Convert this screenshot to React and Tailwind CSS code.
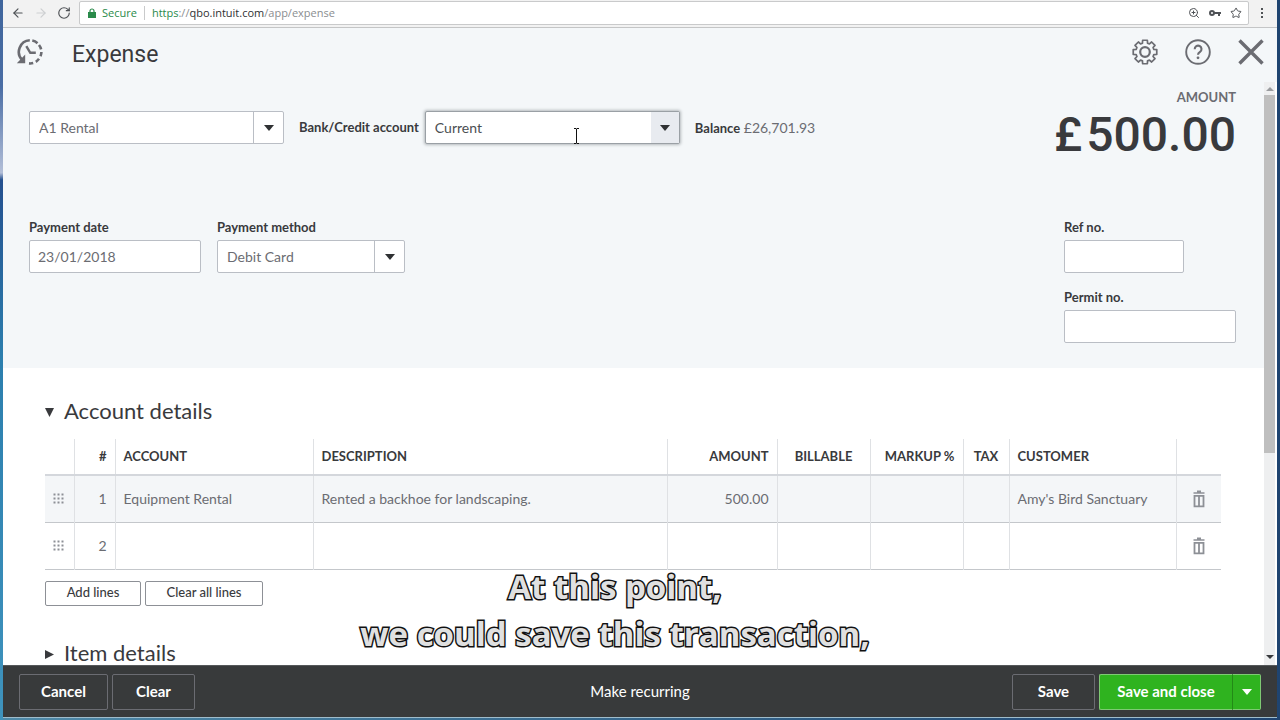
import { useState } from 'react';
import { ArrowLeft, ArrowRight, RotateCw, ZoomIn, Star } from 'lucide-react';
import clsx from 'clsx';

const initialLines = [
  { id: 1, account: 'Equipment Rental', description: 'Rented a backhoe for landscaping.', amount: '500.00', customer: "Amy's Bird Sanctuary" },
  { id: 2, account: '', description: '', amount: '', customer: '' },
];

// 8 teeth with slightly rounded joins
const gearPoints = Array.from({ length: 8 }, (_, i) => {
  const a = (i * Math.PI) / 4;
  return [[-0.28, 9.2], [-0.2, 12], [0.2, 12], [0.28, 9.2]]
    .map(([d, r]) => `${(13 + r * Math.sin(a + d)).toFixed(2)},${(13 - r * Math.cos(a + d)).toFixed(2)}`)
    .join(' ');
}).join(' ');

const GearIcon = () => (
  <svg width="26" height="26" viewBox="0 0 26 26" fill="none" stroke="currentColor" strokeLinejoin="round">
    <polygon points={gearPoints} strokeWidth="1.7" />
    <circle cx="13" cy="13" r="4.8" strokeWidth="2.2" />
  </svg>
);

const HelpIcon = () => (
  <svg width="26" height="26" viewBox="0 0 26 26" fill="none" stroke="currentColor">
    <circle cx="13" cy="13" r="11.8" strokeWidth="1.9" />
    <path d="M9.7 10.2a3.4 3.4 0 1 1 5.3 2.7c-1.3.9-2 1.4-2 2.9" strokeWidth="2.1" />
    <circle cx="13" cy="18.8" r="1.4" fill="currentColor" stroke="none" />
  </svg>
);

const CloseIcon = () => (
  <svg width="26" height="26" viewBox="0 0 26 26" fill="none" stroke="currentColor" strokeWidth="3.4">
    <path d="M1.5 1.5 24.5 24.5M24.5 1.5 1.5 24.5" />
  </svg>
);

const RecentIcon = () => (
  <svg width="28" height="28" viewBox="0 0 28 28" fill="none" stroke="currentColor" strokeWidth="2.6">
    <path d="M13.8 2.3A11.6 11.6 0 0 0 6.2 22" />
    <path d="M16.3 2.6a11.6 11.6 0 0 1 5.2 2.6M23 7a11.6 11.6 0 0 1 2.1 4.4M25.4 14a11.6 11.6 0 0 1-.9 4.2M23 20.8a11.6 11.6 0 0 1-3.2 3M17.2 25.1a11.6 11.6 0 0 1-4.2.3" />
    <path d="M10.3 8.2l4 6.6h5.5" strokeWidth="2.4" />
    <path d="M9.2 16.6v8.6H.8z" fill="currentColor" stroke="none" />
  </svg>
);

const TrashIcon = () => (
  <svg width="12" height="18" viewBox="0 0 12 18" fill="none" stroke="currentColor">
    <path d="M.5 3h11M4 1.4h4" strokeWidth="1.6" />
    <path d="M1.5 5.9h9v10.4h-9zM6 5.9v10.4" strokeWidth="1.8" />
  </svg>
);

const KeyIcon = () => (
  <svg width="12" height="8" viewBox="0 0 12 8" fill="none" stroke="currentColor">
    <circle cx="3" cy="4" r="2" strokeWidth="2" />
    <path d="M5 4h7M10 4v3" strokeWidth="2" />
  </svg>
);

const LockIcon = () => (
  <svg width="8" height="10" viewBox="0 0 8 10" fill="currentColor">
    <path d="M0 4h8v6H0z" />
    <path d="M2 4.5V3a2 2 0 0 1 4 0v1.5" fill="none" stroke="currentColor" strokeWidth="1.2" />
  </svg>
);

const GripIcon = () => (
  <svg width="11" height="11" viewBox="0 0 11 11" fill="#8d9096">
    {[1, 5, 9].map((y) => [1, 5, 9].map((x) => <rect key={`${x}-${y}`} x={x - 0.5} y={y - 0.5} width="2" height="2" />))}
  </svg>
);

const Caret = ({ className }) => (
  <svg width="10" height="6" viewBox="0 0 10 6" preserveAspectRatio="none" fill="currentColor" className={className}>
    <path d="M0 0h10L5 6z" />
  </svg>
);

const SelectBox = ({ id, label, options, focused, className }) => (
  <div className={clsx('relative h-[33px]', className)}>
    <select
      id={id}
      aria-label={label}
      className={clsx(
        'h-full w-full appearance-none rounded-xs border bg-white pr-9 pl-[9px] text-sm outline-none',
        focused ? 'border-[#9aa0a5] text-[#4b4e52] shadow-[0_0_3px_1px_#b5babd]' : 'border-[#babec5] text-[#6b6c72]'
      )}
    >
      {options.map((o) => <option key={o}>{o}</option>)}
    </select>
    <span
      className={clsx(
        'pointer-events-none absolute inset-y-px right-px flex items-center justify-center text-[#2f3133]',
        focused ? 'w-7 bg-[#e8ebf0]' : 'w-[30px] border-l border-[#babec5]'
      )}
    >
      <Caret />
    </span>
  </div>
);

const TextField = ({ id, label, defaultValue, className }) => (
  <div className="flex flex-col">
    <label htmlFor={id} className="mb-1 text-[13px] leading-[18px] font-bold">{label}</label>
    <input
      id={id}
      defaultValue={defaultValue}
      className={clsx('h-[33px] rounded-xs border border-[#babec5] bg-white px-2 text-sm text-[#6b6c72] outline-none', className)}
    />
  </div>
);

const BrowserBar = () => (
  <div className="flex h-7 shrink-0 items-center border-b border-[#c4c5c6] bg-[#f2f2f2] pr-0.5 pb-px pl-2 text-[#4f5256]">
    <button aria-label="Back"><ArrowLeft size={14} /></button>
    <button aria-label="Forward" className="ml-[9px] text-[#cdcfd1]"><ArrowRight size={14} /></button>
    <button aria-label="Reload" className="ml-[9px]"><RotateCw size={14} /></button>
    <div className="ml-2 flex h-6 flex-1 items-center rounded-xs border border-[#c9cacb] bg-white pr-1.5 pl-2 font-['Open_Sans',sans-serif] text-[11px]">
      <span className="flex items-center gap-1.5 text-[#2a8a4a]"><LockIcon />Secure</span>
      <span className="mx-[7px] h-3.5 w-px bg-[#c9cacb]" />
      <span className="flex-1 text-[#8a8d90]">
        <span className="text-[#2a8a4a]">https</span>://<span className="text-[#2f3133]">qbo.intuit.com</span>/app/expense
      </span>
      <span className="flex items-center gap-[9px]">
        <ZoomIn size={12} />
        <KeyIcon />
        <Star size={12} />
      </span>
    </div>
    <button aria-label="Menu" className="flex w-[26px] flex-col items-center gap-0.5">
      <span className="size-0.5 bg-current" />
      <span className="size-0.5 bg-current" />
      <span className="size-0.5 bg-current" />
    </button>
  </div>
);

const Header = () => (
  <header className="flex h-[54px] shrink-0 items-center bg-[#f4f7f9] pr-[13px] pb-1.5 pl-[13px] text-[#6b6c72]">
    <button aria-label="Recent transactions"><RecentIcon /></button>
    <h1 className="ml-7 flex-1 pt-1.5 font-[Roboto,sans-serif] text-[23px] text-[#393a3d]">Expense</h1>
    <div className="flex items-center gap-[27px]">
      <button aria-label="Settings"><GearIcon /></button>
      <button aria-label="Help"><HelpIcon /></button>
      <button aria-label="Close"><CloseIcon /></button>
    </div>
  </header>
);

const ExpenseForm = () => (
  <section className="h-[286px] bg-[#f4f7f9] pr-7 pl-[26px]">
    <div className="flex h-[136px] items-start justify-between">
      <div className="flex items-center pt-[29px]">
        <SelectBox label="Payee" options={['A1 Rental']} className="w-[255px]" />
        <label htmlFor="bank" className="mr-1.5 ml-[15px] text-[13px] font-bold">Bank/Credit account</label>
        <SelectBox id="bank" options={['Current']} focused className="w-[255px]" />
        <p className="ml-[15px] text-sm text-[#6b6c72]">
          <span className="text-[13px] font-bold text-[#393a3d]">Balance</span> £26,701.93
        </p>
      </div>
      <div className="pt-[6px] text-right">
        <p className="text-[13px] leading-[18px] font-bold text-[#6b6c72]">AMOUNT</p>
        <p className="font-[Roboto,sans-serif] text-5xl leading-[58px] font-medium">
          <span className="mr-1">£</span>500.00
        </p>
      </div>
    </div>
    <div className="flex items-start justify-between">
      <div className="flex gap-4">
        <TextField id="date" label="Payment date" defaultValue="23/01/2018" className="w-[172px]" />
        <div className="flex flex-col">
          <label htmlFor="method" className="mb-1 text-[13px] leading-[18px] font-bold">Payment method</label>
          <SelectBox id="method" options={['Debit Card']} className="w-[188px]" />
        </div>
      </div>
      <div className="flex flex-col gap-[15px]">
        <TextField id="ref" label="Ref no." className="w-[120px]" />
        <TextField id="permit" label="Permit no." className="w-[172px]" />
      </div>
    </div>
  </section>
);

const LinesTable = ({ lines, onDelete }) => (
  <table className="w-full table-fixed border-collapse text-sm text-[#6b6c72]">
    <colgroup>
      <col className="w-[29px]" />
      <col className="w-[41px]" />
      <col className="w-[198px]" />
      <col />
      <col className="w-[110px]" />
      <col className="w-[93px]" />
      <col className="w-[93px]" />
      <col className="w-[46px]" />
      <col className="w-[167px]" />
      <col className="w-[45px]" />
    </colgroup>
    <thead>
      <tr className="h-9 border-b-2 border-[#d4d7dc] text-[13px] text-[#393a3d] *:border-r *:border-[#dfe1e4] *:px-2 *:font-bold *:last:border-r-0">
        <th />
        <th className="text-right">#</th>
        <th className="text-left">ACCOUNT</th>
        <th className="text-left">DESCRIPTION</th>
        <th className="text-right">AMOUNT</th>
        <th className="text-center">BILLABLE</th>
        <th className="text-right whitespace-nowrap">MARKUP %</th>
        <th className="text-center">TAX</th>
        <th className="text-left">CUSTOMER</th>
        <th />
      </tr>
    </thead>
    <tbody>
      {lines.map((line, i) => (
        <tr
          key={line.id}
          className={clsx(
            'h-[47px] border-b border-[#c4c7cb] *:border-r *:border-[#dfe1e4] *:px-2 *:last:border-r-0',
            i % 2 === 0 && 'bg-[#f4f6f8]'
          )}
        >
          <td><GripIcon /></td>
          <td className="text-right">{i + 1}</td>
          <td>{line.account}</td>
          <td>{line.description}</td>
          <td className="text-right">{line.amount}</td>
          <td />
          <td />
          <td />
          <td>{line.customer}</td>
          <td>
            <button aria-label="Delete line" className="mx-auto block text-[#8d9096]" onClick={() => onDelete(line.id)}>
              <TrashIcon />
            </button>
          </td>
        </tr>
      ))}
    </tbody>
  </table>
);

const outlineButton = 'h-[25px] rounded-xs border border-[#8d9096] bg-white text-[13px] font-medium';
const footerButton = 'h-9 rounded-xs border border-[#6b6c72] text-[15px] font-bold';

const App = () => {
  const [lines, setLines] = useState(initialLines);

  const addLines = () => {
    setLines((prev) => [...prev, { id: Date.now(), account: '', description: '', amount: '', customer: '' }]);
  };

  const deleteLine = (id) => {
    setLines((prev) => prev.filter((l) => l.id !== id));
  };

  return (
    <div className="flex h-screen bg-linear-to-r from-[#4f8aa8] to-[#1f4470] pr-[3px] font-[Lato,sans-serif] text-[#393a3d]">
      {/* Desktop showing beside the window */}
      <div className="w-[3px] shrink-0 bg-[linear-gradient(#3f659c_0,#4a6ea5_12%,#b3bfd8_24%,#24508f_25%,#2c7fae_50%,#3f93bd)]" />
      <div className="relative mb-0.5 flex min-w-0 flex-1 flex-col border-b border-[#9fbccb] bg-white">
        <BrowserBar />
        <Header />

        <div className="flex min-h-0 flex-1">
          <main className="min-w-0 flex-1 overflow-hidden">
            <ExpenseForm />

            <section className="pt-7 pr-[43px] pl-[42px]">
              <h2>
                <button className="flex h-7 items-center gap-2.5 text-[22px]">
                  <Caret className="mt-1 h-[9px] w-[9px]" />
                  Account details
                </button>
              </h2>
              <div className="pt-[15px]">
                <LinesTable lines={lines} onDelete={deleteLine} />
              </div>
              <div className="flex gap-1 pt-[11px]">
                <button className={clsx(outlineButton, 'w-24')} onClick={addLines}>Add lines</button>
                <button className={clsx(outlineButton, 'w-[118px]')} onClick={() => setLines([])}>Clear all lines</button>
              </div>
              <h2 className="pt-[33px]">
                <button className="flex h-7 items-center gap-2.5 text-[22px] leading-6">
                  <Caret className="mt-1 h-[9px] w-[9px] -rotate-90" />
                  Item details
                </button>
              </h2>
            </section>
          </main>

          {/* Scrollbar */}
          <div className="mr-0.5 flex w-[11px] shrink-0 flex-col items-center bg-[#eeeff0]">
            <span className="flex h-[13px] items-center"><Caret className="h-1 w-2 rotate-180 text-[#9a9c9f]" /></span>
            <span className="h-[358px] w-full bg-[#bfbfbf]" />
            <span className="mt-auto flex h-4 items-center"><Caret className="h-1 w-2 text-[#393a3d]" /></span>
          </div>
        </div>

        <footer className="grid h-[52px] shrink-0 grid-cols-3 items-center border-t border-[#55585a] bg-[#383a3b] px-4 text-white">
          <div className="flex gap-1">
            <button className={clsx(footerButton, 'w-[89px]')}>Cancel</button>
            <button className={clsx(footerButton, 'w-[83px]')}>Clear</button>
          </div>
          <button className="justify-self-center text-[15px]">Make recurring</button>
          <div className="flex justify-end">
            <button className={clsx(footerButton, 'mr-1 w-[83px]')}>Save</button>
            <button className="h-9 w-[134px] rounded-l-xs border border-[#7fc974] border-r-[#238a17] bg-[#2fb31f] text-[15px] font-bold">Save and close</button>
            <button aria-label="More save options" className="flex h-9 w-7 items-center justify-center rounded-r-xs border border-l-0 border-[#7fc974] bg-[#2fb31f]">
              <Caret />
            </button>
          </div>
        </footer>

        {/* Video caption */}
        <p className="pointer-events-none absolute inset-x-0 bottom-[60px] pr-[50px] text-center font-['Open_Sans',sans-serif] text-[33px] leading-[47px] font-bold text-[#e0e0e0] [paint-order:stroke_fill] [-webkit-text-stroke:3px_#111]">
          At this point,
          <br />
          we could save this transaction,
        </p>

        {/* Text cursor */}
        <svg width="7" height="16" viewBox="0 0 7 16" fill="none" stroke="#111" className="pointer-events-none absolute top-32 left-[570px]">
          <path d="M1 .5h2l.5.5.5-.5h2M3.5 1v14M1 15.5h2l.5-.5.5.5h2" />
        </svg>
      </div>
    </div>
  );
};

export default App;
